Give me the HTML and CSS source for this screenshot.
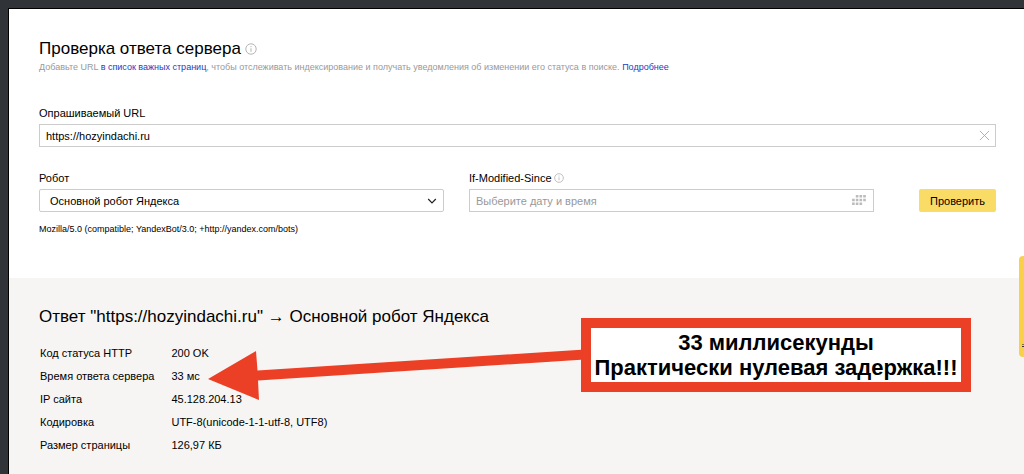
FILE: index.html
```html
<!DOCTYPE html>
<html lang="ru">

<head>
  <meta charset="utf-8">
  <title>Проверка ответа сервера</title>
  <link rel="stylesheet" href="styles.css">
</head>

<body>
  <main class="page">
    <form class="check">
      <h1>Проверка ответа сервера
        <svg class="info" viewBox="0 0 12 12">
          <circle cx="6" cy="6" r="5.2" />
          <path d="M6 5.2v3.6M6 3v1.2" />
        </svg>
      </h1>
      <p class="hint">Добавьте URL <a href="#">в список важных страниц</a>, чтобы отслеживать индексирование и получать уведомления об изменении его статуса в поиске. <a href="#">Подробнее</a></p>

      <div class="field url">
        <label for="url">Опрашиваемый URL</label>
        <div class="control">
          <input id="url" type="text" value="https://hozyindachi.ru">
          <button class="clear" type="button" aria-label="Очистить">
            <svg viewBox="0 0 12 12">
              <path d="M1 1l10 10M11 1L1 11" />
            </svg>
          </button>
        </div>
      </div>

      <div class="row">
        <div class="fields">
          <div class="field">
            <label for="robot">Робот</label>
            <div class="control">
              <select id="robot">
                <option>Основной робот Яндекса</option>
              </select>
              <svg class="chevron" viewBox="0 0 10 6">
                <path d="M1.2 1l3.8 3.8L8.8 1" />
              </svg>
            </div>
          </div>
          <div class="field">
            <label for="since">If-Modified-Since
              <svg class="info small" viewBox="0 0 12 12">
                <circle cx="6" cy="6" r="5.2" />
                <path d="M6 5.2v3.6M6 3v1.2" />
              </svg>
            </label>
            <div class="control">
              <input id="since" type="text" placeholder="Выберите дату и время">
              <svg class="calendar" viewBox="0 0 14 10">
                <path d="M3.8 0h2.6v2.6h-2.6zM7.5 0h2.6v2.6h-2.6zM11.2 0h2.6v2.6h-2.6zM.1 3.7h2.6v2.6h-2.6zM3.8 3.7h2.6v2.6h-2.6zM7.5 3.7h2.6v2.6h-2.6zM11.2 3.7h2.6v2.6h-2.6zM.1 7.4h2.6v2.6h-2.6zM3.8 7.4h2.6v2.6h-2.6zM7.5 7.4h2.6v2.6h-2.6z" />
              </svg>
            </div>
          </div>
        </div>
        <button class="submit" type="button">Проверить</button>
      </div>
      <p class="agent">Mozilla/5.0 (compatible; YandexBot/3.0; +http://yandex.com/bots)</p>
    </form>

    <section class="answer">
      <h2>Ответ "https://hozyindachi.ru" → Основной робот Яндекса</h2>
      <table>
        <tr>
          <th scope="row">Код статуса HTTP</th>
          <td>200 OK</td>
        </tr>
        <tr>
          <th scope="row">Время ответа сервера</th>
          <td>33 мс</td>
        </tr>
        <tr>
          <th scope="row">IP сайта</th>
          <td>45.128.204.13</td>
        </tr>
        <tr>
          <th scope="row">Кодировка</th>
          <td>UTF-8(unicode-1-1-utf-8, UTF8)</td>
        </tr>
        <tr>
          <th scope="row">Размер страницы</th>
          <td>126,97 КБ</td>
        </tr>
      </table>

      <div class="callout">
        <svg viewBox="0 0 373 82" preserveAspectRatio="none">
          <polygon points="0,61 48,33 49.5,52.5 373,31.7 373,41.7 50,62.5 51,82" />
        </svg>
        <p>33 миллисекунды<br>Практически нулевая задержка!!!</p>
      </div>
    </section>
  </main>
  <div class="side_tab"><span></span></div>
</body>

</html>
```

FILE: styles.css
```css
* {
  box-sizing: border-box;
}

body {
  margin: 0;
  padding: 8px 0 0 8px;
  min-height: 100vh;
  display: flex;
  position: relative;
  overflow-x: hidden;
  font-family: "Liberation Sans", Arial, Helvetica, sans-serif;
  font-size: 11px;
  line-height: 14px;
  color: #000;
  background: #303338;
}

h1, h2, p {
  margin: 0;
  font-weight: normal;
}

h1, h2 {
  font-size: 17px;
  line-height: 22px;
}

a {
  color: #1a3dc1;
  text-decoration: none;
}

input, select, button {
  font: inherit;
  color: inherit;
}

.page {
  flex: 1;
  display: flex;
  flex-direction: column;
  border-top: 1px solid #000;
  border-left: 1px solid #000;
  background: #fff;
}

/* request form */
.check {
  padding: 29px 28px 42px 30px;
}

.info {
  width: 12px;
  height: 12px;
  margin-left: -1px;
  vertical-align: -1px;
  fill: none;
  stroke: #b5b5b5;
  stroke-width: 1;
}
.info.small {
  width: 10px;
  height: 10px;
}

.hint {
  font-size: 9px;
  color: #999;
}

.url {
  margin: 32px 0 24px;
}

.field label {
  display: block;
  margin-bottom: 4px;
}

.control {
  position: relative;
}

.control input,
.control select {
  display: block;
  width: 100%;
  height: 23px;
  padding: 0 28px 0 6px;
  border: 1px solid #ccc;
  border-radius: 0;
  background: #fff;
  appearance: none;
}
.control select {
  padding-left: 10px;
  border-radius: 2px;
}
.control input::placeholder {
  color: #999;
}

.clear {
  position: absolute;
  top: 0;
  right: 0;
  width: 23px;
  height: 23px;
  padding: 6px;
  border: 0;
  background: none;
}
.clear svg {
  display: block;
  width: 11px;
  height: 11px;
  stroke: #aaa;
}

.chevron {
  position: absolute;
  top: 9px;
  right: 7px;
  width: 10px;
  height: 6px;
  fill: none;
  stroke: #222;
  stroke-width: 1.2;
}

.calendar {
  position: absolute;
  top: 6px;
  right: 8px;
  width: 14px;
  height: 10px;
  fill: #bbb;
}

.row {
  display: flex;
  gap: 45px;
  align-items: flex-end;
}

.fields {
  flex: 1;
  display: grid;
  grid-template-columns: 1fr 1fr;
  column-gap: 25px;
}

.submit {
  width: 77px;
  height: 23px;
  padding: 0;
  border: 0;
  border-radius: 2px;
  background: #f9dc66;
}

.agent {
  margin-top: 10px;
  font-size: 9px;
}

/* server answer */
.answer {
  flex: 1;
  position: relative;
  padding: 28px 28px 14px 30px;
  background: #f6f5f3;
}

.answer table {
  margin-top: 14px;
  border-collapse: collapse;
}
.answer th,
.answer td {
  padding: 4px 0;
  line-height: 15px;
  text-align: left;
  font-weight: normal;
}
.answer th {
  padding-left: 1px;
  padding-right: 17px;
}

.callout {
  position: absolute;
  top: 40px;
  left: 199px;
  right: 53px;
  display: flex;
}
.callout svg {
  flex: 1;
  min-width: 0;
  height: 82px;
  fill: #eb4025;
}
.callout p {
  align-self: flex-start;
  width: 390px;
  padding: 2px 0;
  border: 10px solid #eb4025;
  background: #fff;
  font-size: 22px;
  line-height: 25px;
  font-weight: bold;
  text-align: center;
  white-space: nowrap;
}

/* feedback tab sticking out of the right edge */
.side_tab {
  position: absolute;
  top: 256px;
  right: 0;
  width: 5px;
  height: 101px;
  padding: 88px 0 0 3px;
  border-radius: 4px 0 0 4px;
  background: #fad049;
}
.side_tab span {
  display: block;
  height: 3px;
  border-top: 1px solid #88742f;
  border-bottom: 1px solid #333;
}
```
